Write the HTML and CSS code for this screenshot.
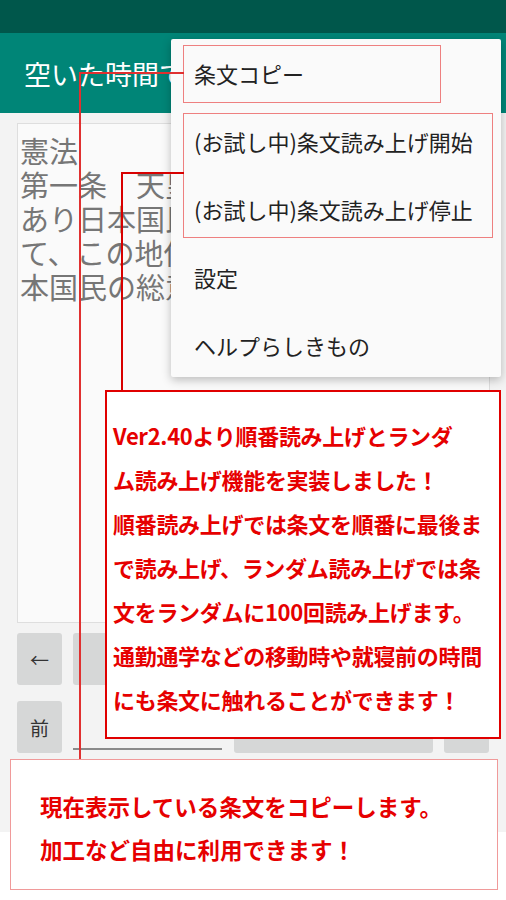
FILE: index.html
```html
<!DOCTYPE html>
<html lang="ja">
<head>
    <meta charset="UTF-8">
    <meta name="viewport" content="width=device-width, initial-scale=1.0">
    <title>空いた時間で</title>
    <link rel="stylesheet" href="styles.css">
</head>
<body>
    <div class="screen">
        <div class="status-bar"></div>
        <div class="app-bar">
            <span class="app-title">空いた時間で条文暗記</span>
        </div>
        <div class="content">
            <div class="article-box">
                <div class="article-text">
                    憲法<br>
                    第一条　天皇は、日本国の象徴で<br>
                    あり日本国民統合の象徴であつ<br>
                    て、この地位は、主権の存する日<br>
                    本国民の総意に基く。
                </div>
            </div>
            <div class="button-row">
                <div class="btn btn-small">←</div>
                <div class="btn btn-wide"></div>
                <div class="btn btn-wide"></div>
            </div>
            <div class="button-row second">
                <div class="btn btn-small">前</div>
                <div class="edit-field"></div>
                <div class="btn btn-mid"></div>
                <div class="btn btn-end"></div>
            </div>
        </div>
        <div class="bottom-area"></div>

        <ul class="popup-menu">
            <li>条文コピー</li>
            <li>(お試し中)条文読み上げ開始</li>
            <li>(お試し中)条文読み上げ停止</li>
            <li>設定</li>
            <li>ヘルプらしきもの</li>
        </ul>

        <div class="mark mark-copy"></div>
        <div class="mark mark-speech"></div>

        <div class="wire wire-a-h"></div>
        <div class="wire wire-a-v"></div>
        <div class="wire wire-b-h"></div>
        <div class="wire wire-b-v"></div>

        <div class="note note-speech">
            Ver2.40より順番読み上げとランダ<br>
            ム読み上げ機能を実装しました！<br>
            順番読み上げでは条文を順番に最後ま<br>
            で読み上げ、ランダム読み上げでは条<br>
            文をランダムに100回読み上げます。<br>
            通勤通学などの移動時や就寝前の時間<br>
            にも条文に触れることができます！
        </div>

        <div class="note note-copy">
            現在表示している条文をコピーします。<br>
            加工など自由に利用できます！
        </div>
    </div>
</body>
</html>
```

FILE: styles.css
```css
body {
    margin: 0;
    padding: 0;
    background-color: #ffffff;
    font-family: "Noto Sans CJK JP", "Noto Sans", sans-serif;
}
.screen {
    position: relative;
    width: 506px;
    height: 900px;
    overflow: hidden;
}
.status-bar {
    height: 33px;
    background-color: #00574b;
}
.app-bar {
    height: 80px;
    background-color: #008577;
    display: flex;
    align-items: center;
    padding-left: 24px;
}
.app-title {
    color: #ffffff;
    font-size: 27px;
    white-space: nowrap;
}
.content {
    height: 719px;
    box-sizing: border-box;
    background-color: #f3f3f3;
    padding: 10px 16px 0 17px;
}
.article-box {
    height: 500px;
    box-sizing: border-box;
    border: 1px solid #dedede;
    background-color: #fafafa;
    padding: 9px 2px 0 2px;
    overflow: hidden;
}
.article-text {
    color: #767676;
    font-size: 29px;
    line-height: 34px;
    white-space: nowrap;
}
.button-row {
    display: flex;
    gap: 11px;
    height: 52px;
    margin-top: 10px;
}
.button-row.second {
    margin-top: 16px;
}
.btn {
    background-color: #d6d7d7;
    border-radius: 3px;
    display: flex;
    align-items: center;
    justify-content: center;
    color: #333;
    font-size: 19px;
}
.btn-small {
    width: 45px;
}
.btn-wide {
    width: 200px;
}
.edit-field {
    width: 149px;
    height: 47px;
    border-bottom: 2px solid #8a8a8a;
}
.btn-mid {
    width: 199px;
    margin-left: 1px;
}
.btn-end {
    width: 45px;
}
.bottom-area {
    height: 68px;
    background-color: #ffffff;
}
.popup-menu {
    position: absolute;
    left: 171px;
    top: 39px;
    width: 330px;
    height: 338px;
    margin: 0;
    padding: 0;
    list-style: none;
    background-color: #fafafa;
    border-radius: 2px;
    box-shadow: 0 3px 10px rgba(0, 0, 0, 0.25);
}
.popup-menu li {
    height: 68px;
    line-height: 68px;
    padding-left: 23px;
    color: #222222;
    font-size: 22px;
    white-space: nowrap;
}
.mark {
    position: absolute;
    border: 1.5px solid #ee8080;
    box-sizing: border-box;
}
.mark-copy {
    left: 183px;
    top: 45px;
    width: 258px;
    height: 58px;
}
.mark-speech {
    left: 183px;
    top: 113px;
    width: 310px;
    height: 125px;
}
.wire {
    position: absolute;
    background-color: #e03030;
}
.wire-a-h {
    left: 80px;
    top: 72px;
    width: 104px;
    height: 2px;
}
.wire-a-v {
    left: 79px;
    top: 72px;
    width: 2px;
    height: 687px;
}
.wire-b-h {
    left: 122px;
    top: 172px;
    width: 62px;
    height: 2px;
    background-color: #d80000;
}
.wire-b-v {
    left: 121px;
    top: 172px;
    width: 2px;
    height: 219px;
    background-color: #d80000;
}
.note {
    position: absolute;
    box-sizing: border-box;
    background-color: #ffffff;
    color: #e60000;
    font-weight: bold;
    font-size: 22px;
    white-space: nowrap;
}
.note-speech {
    left: 105px;
    top: 390px;
    width: 396px;
    height: 349px;
    border: 2px solid #e00000;
    padding: 21px 0 0 6px;
    line-height: 44px;
    letter-spacing: -0.3px;
}
.note-copy {
    left: 10px;
    top: 759px;
    width: 488px;
    height: 131px;
    border: 1.5px solid #f09a9a;
    padding: 25px 0 0 29px;
    line-height: 43px;
    font-size: 22.5px;
}
```
